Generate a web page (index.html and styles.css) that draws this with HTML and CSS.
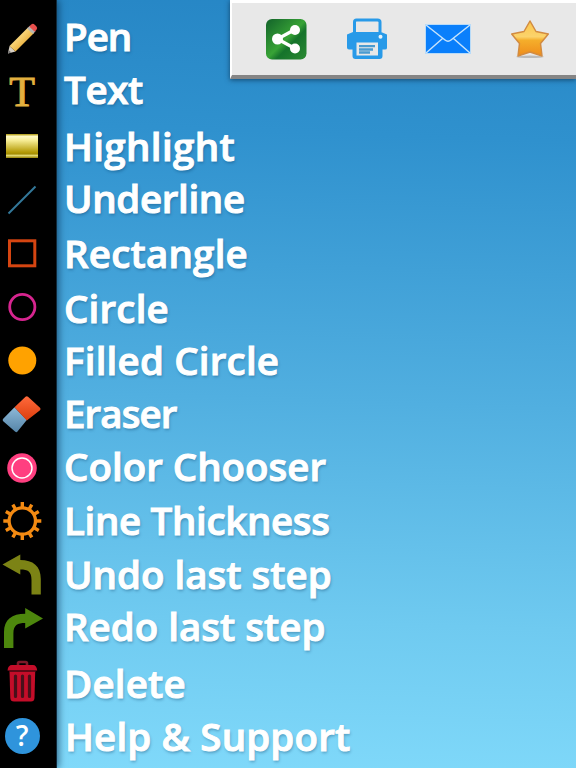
FILE: index.html
```html
<!DOCTYPE html>
<html lang="en">
  <head>
    <meta charset="UTF-8" />
    <meta name="viewport" content="width=device-width, initial-scale=1.0" />
    <title>Drawing Tools</title>
    <link rel="stylesheet" href="styles.css">
  </head>
  <body>
    <div class="app">
      <div class="sidebar">
        <!-- Pen -->
        <div class="tool">
          <svg width="44" height="44" viewBox="0 0 44 44">
            <defs>
              <linearGradient id="wood" x1="0" y1="0" x2="1" y2="1">
                <stop offset="0.3" stop-color="#ffe08a" />
                <stop offset="0.75" stop-color="#e5a72f" />
              </linearGradient>
            </defs>
            <path d="M8 36.5L9.500 29L15.500 34.500Z" fill="#d8d0c4" />
            <path d="M8 36.5L8.800 33.200L11.400 35.600Z" fill="#777" />
            <path d="M9.500 29L28 10.500L34 16L15.500 34.500Z" fill="url(#wood)" />
            <path d="M27 11.500L29.700 8.700L35.500 14.300L33 17Z" fill="#b9b5b0" />
            <path d="M29.200 9.500L31.200 7.500Q33 6 34.700 7.700L36.300 9.300Q38 11 36.500 12.700L34.700 14.800Z" fill="#e8504c" />
          </svg>
        </div>
        <!-- Text -->
        <div class="tool">
          <span class="letter-icon">T</span>
        </div>
        <!-- Highlight -->
        <div class="tool">
          <span class="highlight-icon"></span>
        </div>
        <!-- Underline -->
        <div class="tool">
          <svg width="44" height="44" viewBox="0 0 44 44">
            <path d="M8.500 35.500L35.500 8.500" stroke="#33789a" stroke-width="1.900" />
          </svg>
        </div>
        <!-- Rectangle -->
        <div class="tool">
          <svg width="44" height="44" viewBox="0 0 44 44">
            <rect x="9.500" y="9.800" width="25.300" height="25" fill="none" stroke="#d54511" stroke-width="3" />
          </svg>
        </div>
        <!-- Circle -->
        <div class="tool">
          <svg width="44" height="44" viewBox="0 0 44 44">
            <circle cx="22.300" cy="22" r="12.600" fill="none" stroke="#d6258f" stroke-width="2.800" />
          </svg>
        </div>
        <!-- Filled circle -->
        <div class="tool">
          <svg width="44" height="44" viewBox="0 0 44 44">
            <circle cx="22.300" cy="22.500" r="14" fill="#ffa200" />
          </svg>
        </div>
        <!-- Eraser -->
        <div class="tool">
          <svg width="44" height="44" viewBox="0 0 44 44">
            <defs>
              <linearGradient id="eraser-blue" x1="0" y1="0" x2="0" y2="1">
                <stop offset="0" stop-color="#8db9d8" />
                <stop offset="1" stop-color="#5685a8" />
              </linearGradient>
              <linearGradient id="eraser-red" x1="0" y1="0" x2="0" y2="1">
                <stop offset="0" stop-color="#ff6a3c" />
                <stop offset="1" stop-color="#dc3d0c" />
              </linearGradient>
            </defs>
            <g transform="translate(0 0.8)">
              <path d="M14.500 14.500L26.800 27.300L17.500 38.700Q16.500 40 15 38.700L3.200 28.500Q2 27.300 3.200 26Z" fill="url(#eraser-blue)" />
              <path d="M14.500 14.500L25.500 4Q26.800 2.800 28 4L40 15Q41.200 16.200 40 17.500L26.800 27.800Z" fill="url(#eraser-red)" />
            </g>
          </svg>
        </div>
        <!-- Color chooser -->
        <div class="tool">
          <svg width="44" height="44" viewBox="0 0 44 44">
            <circle cx="22" cy="22" r="14.800" fill="#ff3f80" />
            <circle cx="22" cy="22" r="10" fill="none" stroke="#fff" stroke-width="1.500" />
          </svg>
        </div>
        <!-- Line thickness -->
        <div class="tool">
          <svg width="44" height="44" viewBox="0 0 44 44">
            <circle cx="22.300" cy="22" r="13.200" fill="none" stroke="#f38a12" stroke-width="3.300" />
            <path id="teeth" d="M22.300 3V8M22.300 36V41M3.300 22H8.300M36.300 22H41.300" stroke="#f38a12" stroke-width="3.400" />
            <use href="#teeth" transform="rotate(30 22.300 22)" />
            <use href="#teeth" transform="rotate(60 22.300 22)" />
          </svg>
        </div>
        <!-- Undo -->
        <div class="tool">
          <svg width="44" height="44" viewBox="0 0 44 44">
            <path d="M2.500 11.500L20.300 1.500V7C33 7 40.800 13 40.800 26V41.500H31.500V27C31.500 18.500 28 16.500 20.300 16.500V21.500Z" fill="#7c8315" />
          </svg>
        </div>
        <!-- Redo -->
        <div class="tool">
          <svg width="44" height="44" viewBox="0 0 44 44">
            <path d="M43 12.500L25.200 2V7.700C12 7.700 4 13.500 4 26V42H13.400V27.500C13.400 19 17.500 17 25.200 17V22.500Z" fill="#4d870d" />
          </svg>
        </div>
        <!-- Delete -->
        <div class="tool">
          <svg width="44" height="44" viewBox="0 0 44 44">
            <path d="M18 5.500V3.500Q18 2 19.500 2H25.500Q27 2 27 3.500V5.500" fill="none" stroke="#7c1928" stroke-width="2.600" />
            <path d="M7.500 10.500Q8 5 12 5H33Q36.500 5 37.200 10.500Z" fill="#c40d29" />
            <path d="M9.500 11.500H35.200L34.500 38Q34.300 41.500 31 41.500H14Q10.500 41.500 10.300 38Z" fill="#c40d29" />
            <path d="M15.500 16V36.500M22.500 16V36.500M29.500 16V36.500" stroke="#48101a" stroke-width="3.200" stroke-linecap="round" />
            <path d="M9 11H36" stroke="#5f0c19" stroke-width="1" />
          </svg>
        </div>
        <!-- Help -->
        <div class="tool">
          <span class="help-icon">?</span>
        </div>
      </div>

      <ul class="labels">
        <li class="pen">Pen</li>
        <li class="text">Text</li>
        <li class="highlight">Highlight</li>
        <li class="underline">Underline</li>
        <li class="rectangle">Rectangle</li>
        <li class="circle">Circle</li>
        <li class="filled">Filled Circle</li>
        <li class="eraser">Eraser</li>
        <li class="color">Color Chooser</li>
        <li class="thickness">Line Thickness</li>
        <li class="undo">Undo last step</li>
        <li class="redo">Redo last step</li>
        <li class="delete">Delete</li>
        <li class="help">Help &amp; Support</li>
      </ul>

      <div class="toolbar">
        <!-- Share -->
        <svg width="42" height="42" viewBox="0 0 42 42">
          <defs>
            <linearGradient id="green" x1="0" y1="0" x2="1" y2="1">
              <stop offset="0" stop-color="#12622a" />
              <stop offset="0.5" stop-color="#38a336" />
              <stop offset="0.62" stop-color="#15732b" />
              <stop offset="1" stop-color="#2b8a32" />
            </linearGradient>
          </defs>
          <rect x="1" y="1" width="40.500" height="40.500" rx="6" fill="url(#green)" />
          <path d="M30 11.500L12.500 21L30 30.500" fill="none" stroke="#fff" stroke-width="3.300" />
          <circle cx="30" cy="12" r="5" fill="#fff" />
          <circle cx="12.500" cy="21" r="5.500" fill="#fff" />
          <circle cx="30" cy="30.500" r="5" fill="#fff" />
        </svg>
        <!-- Print -->
        <svg class="print" width="42" height="42" viewBox="0 0 42 42">
          <path d="M8.500 14V4Q8.500 2 10.500 2H31.500Q34 2 34 4V14" fill="none" stroke="#289ae8" stroke-width="3" />
          <path d="M7 14H35L41 16.500V30Q41 31.500 39 31.500H36.500V38Q36.500 41 33.500 41H9.500Q6.500 41 6.500 38V31.500H3Q1 31.500 1 29.500V16.500Z" fill="#289ae8" />
          <rect x="10.500" y="24.500" width="21.500" height="13" fill="#e8e8e8" />
          <path d="M13 28.200H29M13 31.500H27M13 34.500H24" stroke="#4a9bd0" stroke-width="2.300" />
          <circle cx="34.500" cy="18.700" r="2" fill="#e8f2f8" />
        </svg>
        <!-- Mail -->
        <svg width="48" height="32" viewBox="0 0 48 32">
          <rect x="1.500" y="1.500" width="45" height="29" fill="#0a7ffb" stroke="#b8dbf8" stroke-width="1" />
          <path d="M2 2L21 17Q24 19.500 27 17L46 2M2 30L18.500 15.500M46 30L29.500 15.500" fill="none" stroke="#c6e3fc" stroke-width="1.500" />
        </svg>
        <!-- Favorite -->
        <svg width="42" height="42" viewBox="0 0 42 42">
          <defs>
            <linearGradient id="gold" x1="0" y1="0" x2="0" y2="1">
              <stop offset="0" stop-color="#fcc64b" />
              <stop offset="0.45" stop-color="#fbd36c" />
              <stop offset="0.55" stop-color="#f5ae2b" />
              <stop offset="1" stop-color="#ee8c1b" />
            </linearGradient>
          </defs>
          <ellipse cx="21" cy="38.800" rx="14" ry="1.200" fill="#bbb" />
          <path d="M21 3L27 13.500L39.300 16L31.500 25.500L33 38L21 34L9 38L10.500 25.500L2.700 16L15 13.500Z" fill="url(#gold)" stroke="#d28b41" stroke-width="1.500" stroke-linejoin="round" />
        </svg>
      </div>
    </div>
  </body>
</html>
```
FILE: styles.css
```css
body {
  margin: 0;
  padding: 0;
  font-family: "Open Sans", "Noto Sans", sans-serif;
}

.app {
  position: relative;
  display: flex;
  width: 576px;
  height: 768px;
  overflow: hidden;
  background: linear-gradient(182deg, #2686c5 0%, #2f91ce 18%, #51afe0 52%, #6fcaf0 80%, #80d9fa 100%);
}

.sidebar {
  box-sizing: border-box;
  width: 57px;
  padding-top: 12px;
  background-color: #000;
  border-right: 1px solid #102b3d;
  box-shadow: 2px 0 7px rgba(0, 35, 65, 0.55);
}

.tool {
  display: flex;
  align-items: center;
  justify-content: center;
  width: 44px;
  height: 53.6px;
}

.letter-icon {
  font-family: "Liberation Serif", serif;
  font-size: 42px;
  line-height: 42px;
  color: #e3b03f;
  -webkit-text-stroke: 1px #e3b03f;
}

.highlight-icon {
  width: 32px;
  height: 24px;
  background: linear-gradient(#aa9307 0%, #fff9c4 10%, #f8ef99 25%, #b39a04 76%, #a18b04 84%, #ece47d 88%, #968204 100%);
}

.help-icon {
  width: 35px;
  height: 36px;
  border-radius: 50%;
  background-color: #2f94dc;
  color: #fff;
  font-size: 28px;
  font-weight: 600;
  line-height: 34px;
  text-align: center;
}

.labels {
  display: grid;
  grid-template-rows: 52.5px 57px 52px 55px 55.5px 52px 52.5px 53px 54px 54.5px 52px 56.5px 53px 54px;
  height: 759px;
  margin: 9px 0 0;
  padding: 0 0 0 7px;
  list-style: none;
  color: #fff;
  font-size: 38.5px;
  font-weight: 600;
  line-height: 54px;
  white-space: nowrap;
  text-shadow: 1px 2px 3px rgba(0, 50, 90, 0.35);
  -webkit-text-stroke: 1px #fff;
}

.labels .pen {
  letter-spacing: -1px;
}

.labels .text,
.labels .underline,
.labels .thickness {
  letter-spacing: -0.35px;
}

.labels .highlight {
  letter-spacing: 0.35px;
}

.labels .rectangle,
.labels .circle,
.labels .filled,
.labels .delete {
  letter-spacing: 0.2px;
}

.labels .eraser {
  letter-spacing: -0.9px;
}

.labels .help {
  padding-left: 1px;
  letter-spacing: 0.15px;
}

.toolbar {
  position: absolute;
  top: 0;
  right: 0;
  box-sizing: border-box;
  display: flex;
  align-items: center;
  justify-content: space-between;
  width: 346px;
  height: 79px;
  padding: 0 25px 0 33px;
  background-color: #e8e8e8;
  border-top: 3px solid #fff;
  border-left: 2px solid #fff;
  border-bottom: 4px solid #858585;
  box-shadow: 0 1px 5px rgba(0, 25, 50, 0.6);
}

.toolbar .print {
  margin: 0 -2px 0 2px;
}
```
